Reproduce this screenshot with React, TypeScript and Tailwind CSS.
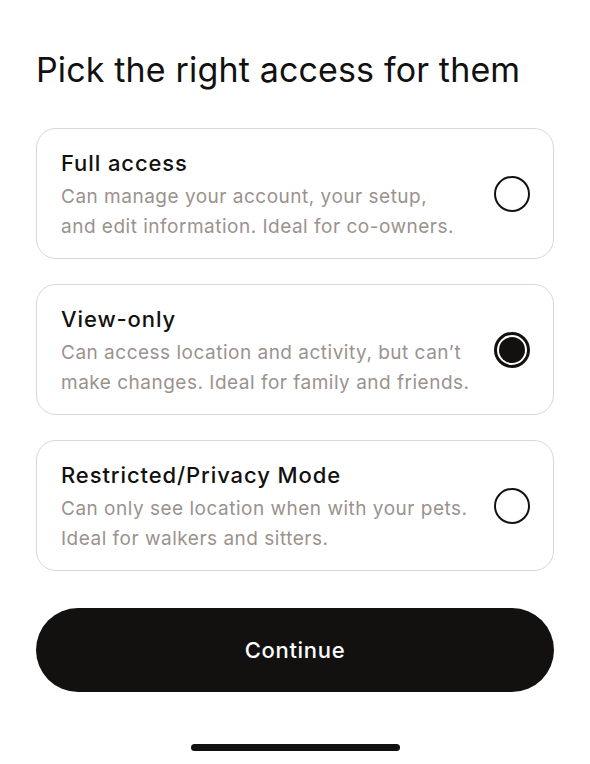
import { useState } from 'react';

const options = [
  {
    id: 'full',
    title: 'Full access',
    lines: ['Can manage your account, your setup,', 'and edit information. Ideal for co-owners.'],
  },
  {
    id: 'view',
    title: 'View-only',
    lines: ['Can access location and activity, but can’t', 'make changes. Ideal for family and friends.'],
  },
  {
    id: 'restricted',
    title: 'Restricted/Privacy Mode',
    lines: ['Can only see location when with your pets.', 'Ideal for walkers and sitters.'],
  },
];

function Radio({ checked }: { checked: boolean }) {
  if (checked) {
    return (
      <div className="w-[36px] h-[36px] mb-[4px] rounded-full border-[3px] border-[#121110] p-[2px] shrink-0">
        <div className="w-full h-full rounded-full bg-[#121110]" />
      </div>
    );
  }
  return <div className="w-[36px] h-[36px] mb-[4px] rounded-full border-[2.5px] border-[#121110] shrink-0" />;
}

export default function App() {
  const [selected, setSelected] = useState('view');

  return (
    <div className="w-[590px] h-[764px] bg-white flex flex-col px-[36px] font-['Inter',sans-serif] text-[#121110]">
      <h1 className="mt-[48px] text-[34px] leading-[44px] tracking-[0.15px] font-normal">
        Pick the right access for them
      </h1>

      <div className="mt-[36px] flex flex-col gap-[25px]">
        {options.map((opt) => (
          <button
            key={opt.id}
            onClick={() => setSelected(opt.id)}
            className="flex items-center justify-between text-left border border-[#d8d8d8] rounded-[20px] pl-[24px] pr-[23px] pt-[20px] pb-[16px]"
          >
            <div>
              <div className="text-[22px] leading-[28px] tracking-[0.9px] font-medium">{opt.title}</div>
              <div className="mt-[5px] text-[19px] leading-[30px] tracking-[0.5px] text-[#9b928d]">
                {opt.lines.map((l) => (
                  <div key={l}>{l}</div>
                ))}
              </div>
            </div>
            <Radio checked={selected === opt.id} />
          </button>
        ))}
      </div>

      <button className="mt-[37px] h-[84px] rounded-full bg-[#121110] text-white text-[22px] tracking-[0.7px] font-medium">
        Continue
      </button>

      <div className="mt-[52px] self-center w-[209px] h-[7px] rounded-full bg-[#121110]" />
    </div>
  );
}
